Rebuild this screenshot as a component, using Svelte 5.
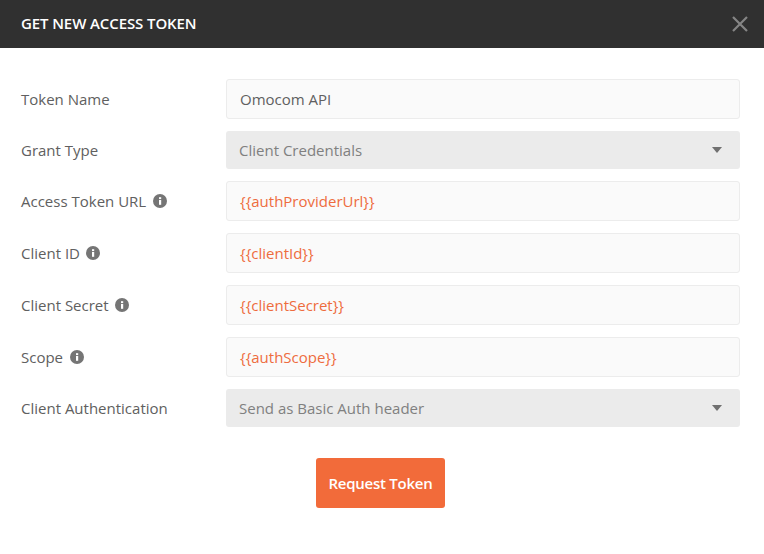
<script>
  const rows = [
    { label: 'Token Name', value: 'Omocom API', kind: 'text' },
    { label: 'Grant Type', value: 'Client Credentials', kind: 'select' },
    { label: 'Access Token URL', value: '{{authProviderUrl}}', kind: 'var', info: true },
    { label: 'Client ID', value: '{{clientId}}', kind: 'var', info: true },
    { label: 'Client Secret', value: '{{clientSecret}}', kind: 'var', info: true },
    { label: 'Scope', value: '{{authScope}}', kind: 'var', info: true },
    { label: 'Client Authentication', value: 'Send as Basic Auth header', kind: 'select' }
  ];
</script>

<div class="modal">
  <header class="head">
    <h1>GET NEW ACCESS TOKEN</h1>
    <svg class="close" width="18" height="18" viewBox="0 0 18 18" aria-label="Close">
      <path d="M2 2 L16 16 M16 2 L2 16" stroke="#858585" stroke-width="2.2" fill="none" />
    </svg>
  </header>

  <main class="form">
    {#each rows as row}
      <div class="row">
        <div class="label">
          <span>{row.label}</span>
          {#if row.info}
            <svg class="info" width="14" height="14" viewBox="0 0 14 14">
              <circle cx="7" cy="7" r="7" fill="#757575" />
              <rect x="6" y="6" width="2.2" height="4.8" fill="#fff" />
              <rect x="6" y="3.2" width="2.2" height="1.9" fill="#fff" />
            </svg>
          {/if}
        </div>
        {#if row.kind === 'select'}
          <div class="select">
            <span>{row.value}</span>
            <svg width="10" height="6" viewBox="0 0 10 6"><path d="M0 0 H10 L5 6 Z" fill="#707070" /></svg>
          </div>
        {:else}
          <div class="input" class:var={row.kind === 'var'}>{row.value}</div>
        {/if}
      </div>
    {/each}

    <div class="actions">
      <button type="button">Request Token</button>
    </div>
  </main>
</div>

<style>
  :global(body) {
    margin: 0;
    background: #fff;
  }
  .modal {
    width: 764px;
    height: 554px;
    background: #fff;
    font-family: "Open Sans", sans-serif;
    font-size: 15px;
    color: #606060;
    overflow: hidden;
  }
  .head {
    height: 48px;
    background: #303030;
    display: flex;
    align-items: center;
    justify-content: space-between;
    padding: 0 15px 0 21px;
  }
  h1 {
    margin: 0 0 3px;
    font-size: 15px;
    font-weight: 600;
    letter-spacing: -0.1px;
    line-height: 20px;
    color: #fff;
  }
  .form {
    padding: 31px 24px 0 21px;
    display: flex;
    flex-direction: column;
    gap: 12px;
  }
  .row {
    display: grid;
    grid-template-columns: 205px 1fr;
    align-items: center;
  }
  .label {
    display: flex;
    align-items: center;
    gap: 6.5px;
  }
  .info {
    flex: none;
  }
  .input {
    box-sizing: border-box;
    height: 40px;
    line-height: 38px;
    padding: 0 13px;
    background: #fafafa;
    border: 1px solid #ececec;
    border-radius: 3px;
    color: #606060;
  }
  .input.var {
    color: #ee6c3e;
  }
  .select {
    box-sizing: border-box;
    height: 38px;
    padding: 0 18px 0 13px;
    background: #ebebeb;
    border-radius: 3px;
    color: #808080;
    display: flex;
    align-items: center;
    justify-content: space-between;
  }
  .actions {
    display: flex;
    justify-content: flex-start;
    padding: 19px 0 0 295px;
  }
  button {
    width: 129px;
    height: 50px;
    border: 0;
    border-radius: 3px;
    background: #f26b3a;
    color: #fff;
    font: 600 15px "Open Sans", sans-serif;
    letter-spacing: -0.25px;
    padding: 0;
  }
</style>
